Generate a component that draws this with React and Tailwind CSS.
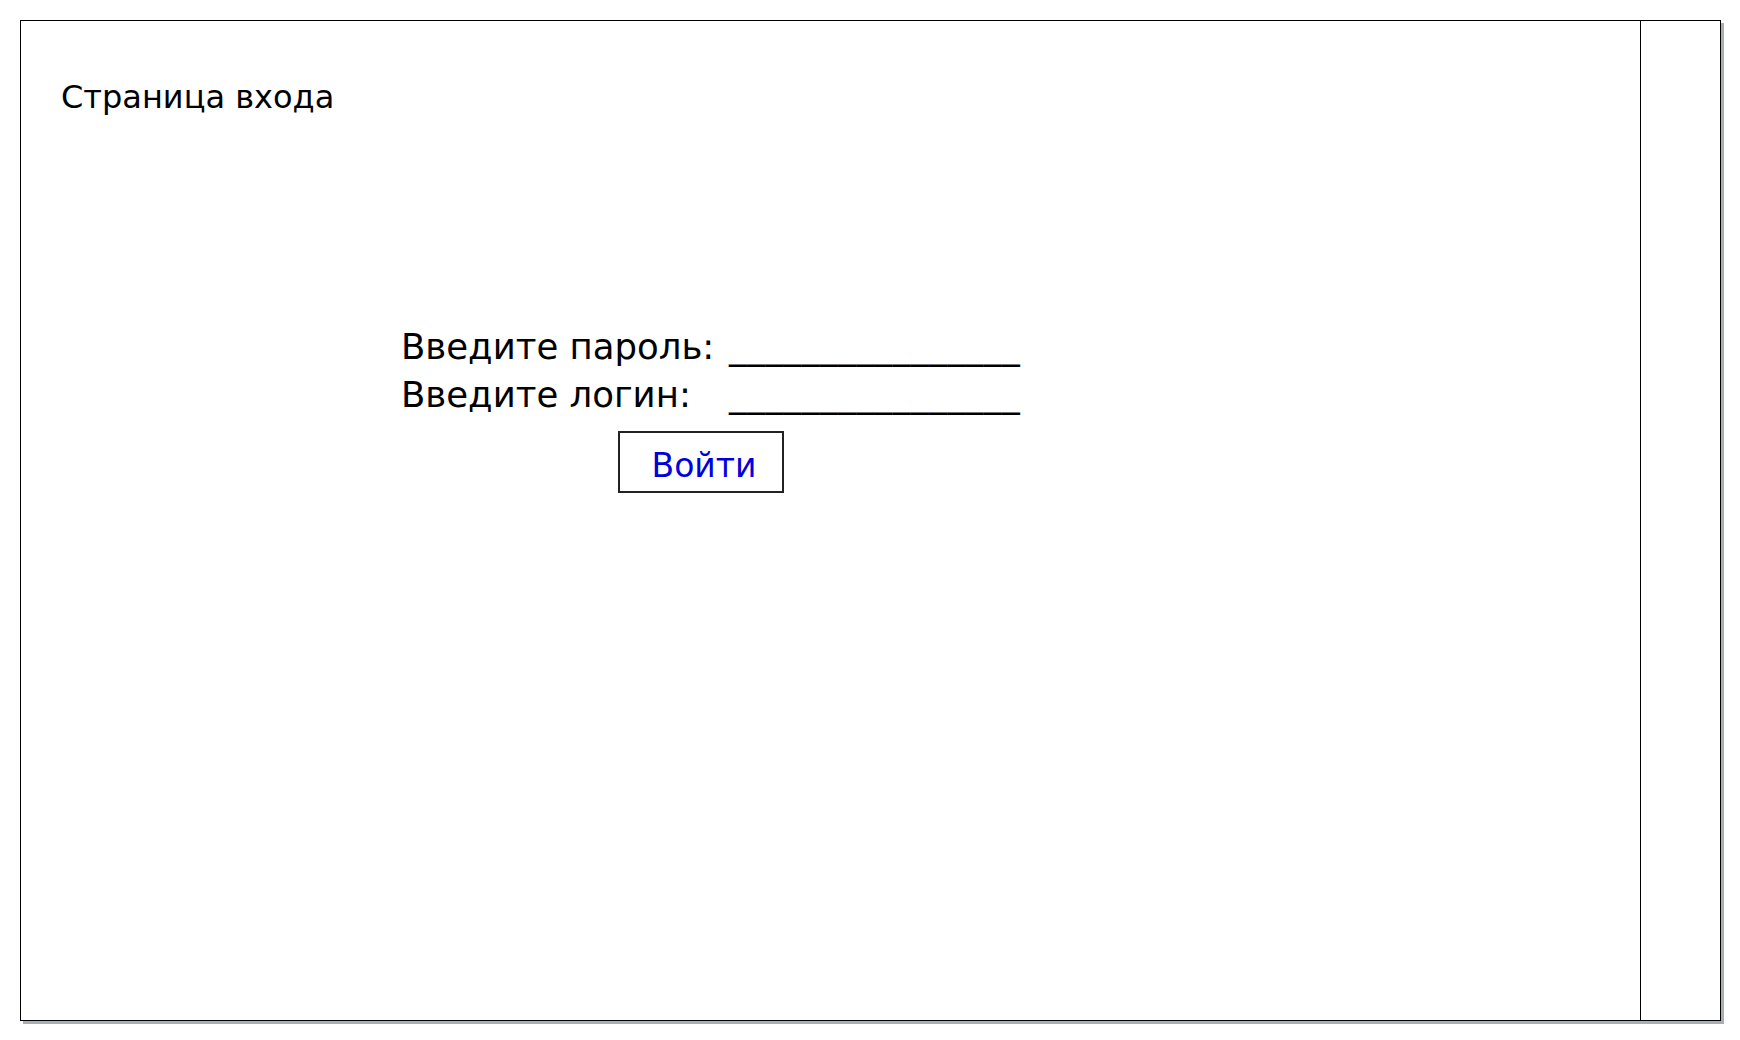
import React from 'react';

const font = { fontFamily: '"DejaVu Sans", Verdana, sans-serif' };

export default function App() {
    return (
        <div className="w-[1740px] h-[1040px] bg-white pt-[20px] pl-[20px]" style={font}>
            <div className="w-[1701px] h-[1001px] border border-black shadow-[3px_3px_0_#a7aeb4] flex">
                {/* Main canvas */}
                <div className="w-[1620px] border-r border-black flex flex-col">
                    <div className="pl-[40px] pt-[58px] text-[32px] leading-[36px] text-black">
                        Страница входа
                    </div>

                    <div className="ml-[380px] mt-[208px] flex flex-col">
                        <div className="grid grid-cols-[328px_auto] text-[35.5px] leading-[48px] text-black">
                            <span>Введите пароль:</span>
                            <span className="tracking-[0.45px]">________________</span>
                            <span>Введите логин:</span>
                            <span className="tracking-[0.45px]">________________</span>
                        </div>
                        <button className="ml-[217px] mt-[12px] w-[166px] h-[62px] border-2 border-[#222] pl-[6px] pt-[8px] text-[33px] leading-[40px] text-[#0000dd] flex items-center justify-center">
                            Войти
                        </button>
                    </div>
                </div>
                {/* Side strip */}
                <div className="flex-1"></div>
            </div>
        </div>
    );
}
